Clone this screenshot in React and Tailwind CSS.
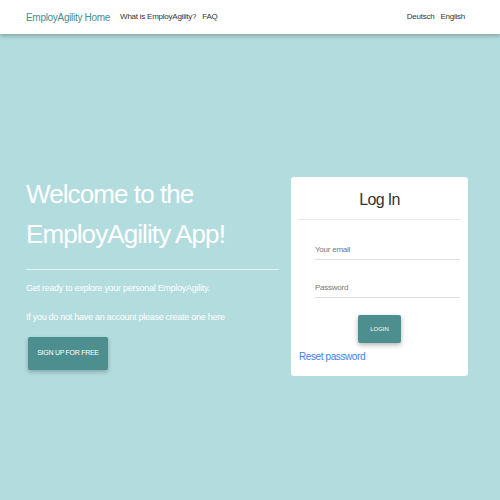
import React from "react";

const font = { fontFamily: '"Liberation Sans", Arial, sans-serif' };

const Header = () => (
  <header className="flex h-[34px] items-center justify-between bg-white pl-[26px] pr-[35px] shadow-[0_2px_4px_rgba(0,0,0,0.25)] relative z-10">
    <nav className="flex items-center">
      <a className="text-[10px] tracking-[-0.03em] text-[#4a8b8c]">EmployAgility Home</a>
      <a className="ml-[10px] text-[8px] tracking-[-0.03em] text-[#333]">What is EmployAgility?</a>
      <a className="ml-[6px] text-[8px] tracking-[-0.03em] text-[#333]">FAQ</a>
    </nav>
    <div className="flex items-center gap-[6px] text-[8px] tracking-[-0.03em] text-[#333]">
      <a>Deutsch</a>
      <a>English</a>
    </div>
  </header>
);

const Welcome = () => (
  <div className="w-[253px]">
    <h1 className="-mt-[3px] text-[26px] leading-[40px] tracking-[-0.035em] text-white">
      Welcome to the
      <br />
      EmployAgility App!
    </h1>
    <hr className="mt-[15px] border-t border-[#e3f3f4]" />
    <p className="mt-[12px] text-[9px] tracking-[-0.03em] text-white">
      Get ready to explore your personal EmployAgility.
    </p>
    <p className="mt-[15px] text-[9px] tracking-[-0.03em] text-white">
      If you do not have an account please create one here
    </p>
    <button className="ml-[2px] mt-[13px] flex h-[33px] w-[80px] items-center justify-center rounded-[2px] bg-[#4d8f8f] text-[7px] tracking-[-0.04em] text-white shadow-[0_2px_4px_rgba(0,0,0,0.25)]">
      SIGN UP FOR FREE
    </button>
  </div>
);

const LoginCard = () => (
  <div className="w-[177px] rounded-[3px] bg-white px-[8px] pb-[12px] pt-[12px]">
    <h2 className="text-center text-[16px] leading-[22px] tracking-[-0.04em] text-[#333]">Log In</h2>
    <hr className="mt-[8px] border-t border-[#e8e8e8]" />
    <div className="ml-[16px] mt-[24px] border-b border-[#dcdfe6] pb-[3px] text-[8px] tracking-[-0.03em] text-[#777]">
      Your email
    </div>
    <div className="ml-[16px] mt-[22px] border-b border-[#dcdfe6] pb-[3px] text-[8px] tracking-[-0.03em] text-[#777]">
      Password
    </div>
    <div className="mt-[17px] flex justify-center">
      <button className="flex h-[28px] w-[43px] items-center justify-center rounded-[2px] bg-[#4d8f8f] text-[6px] text-white shadow-[0_2px_5px_rgba(0,0,0,0.3)]">
        LOGIN
      </button>
    </div>
    <a className="mt-[6px] block text-[10px] tracking-[-0.04em] text-[#3d7ff2]">Reset password</a>
  </div>
);

export default function App() {
  return (
    <div className="h-[500px] w-[500px] overflow-hidden bg-[#b2dcde]" style={font}>
      <Header />
      <main className="flex items-start justify-between pl-[26px] pr-[32px] pt-[143px]">
        <Welcome />
        <LoginCard />
      </main>
    </div>
  );
}
